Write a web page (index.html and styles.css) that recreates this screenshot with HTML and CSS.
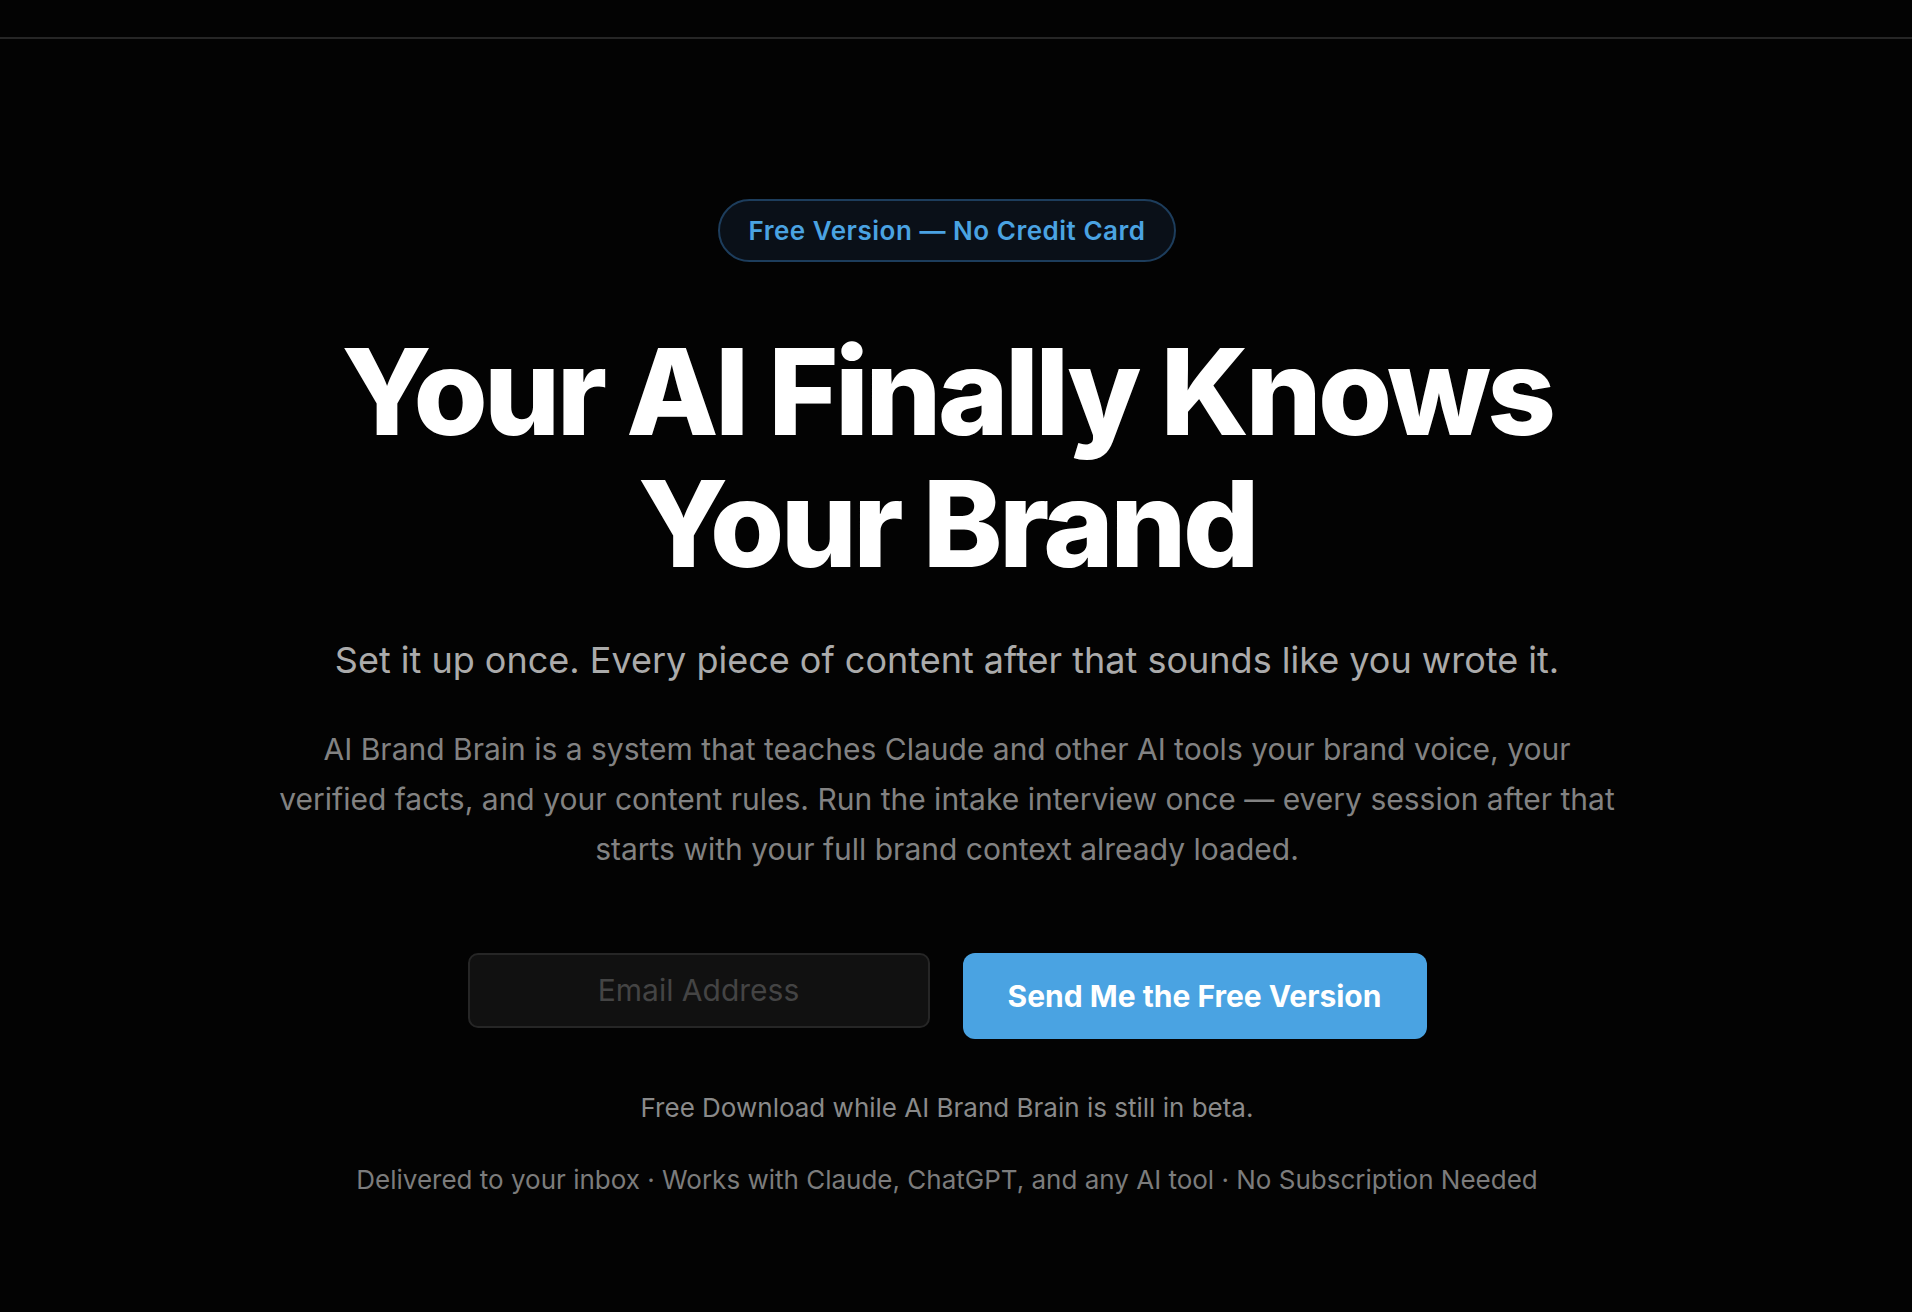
FILE: index.html
```html
<!DOCTYPE html>
<html lang="en">
<head>
<meta charset="utf-8">
<title>AI Brand Brain — Free Version</title>
<link rel="stylesheet" href="styles.css">
</head>
<body>
<header class="topbar"></header>
<main class="hero">
  <div class="badge">Free Version — No Credit Card</div>
  <h1 class="title">Your AI Finally Knows<br>Your Brand</h1>
  <p class="lead">Set it up once. Every piece of content after that sounds like you wrote it.</p>
  <p class="desc">AI Brand Brain is a system that teaches Claude and other AI tools your brand voice, your verified facts, and your content rules. Run the intake interview once — every session after that starts with your full brand context already loaded.</p>
  <form class="signup" onsubmit="return false;">
    <input class="email" type="email" placeholder="Email Address">
    <button class="cta" type="submit">Send Me the Free Version</button>
  </form>
  <p class="note">Free Download while AI Brand Brain is still in beta.</p>
  <p class="perks">Delivered to your inbox · Works with Claude, ChatGPT, and any AI tool · No Subscription Needed</p>
</main>
</body>
</html>
```
FILE: styles.css
```css
html, body {
  margin: 0;
  padding: 0;
  background: #030303;
  min-height: 100%;
}
body {
  font-family: Inter, "Noto Sans", "Liberation Sans", sans-serif;
  color: #fff;
  min-height: 1312px;
}
.topbar {
  height: 37px;
  border-bottom: 2px solid #262626;
}
.hero {
  display: flex;
  flex-direction: column;
  align-items: center;
  text-align: center;
  padding: 160px 18px 0 0;
}
.badge {
  box-sizing: border-box;
  height: 63px;
  padding: 0 28px;
  display: flex;
  align-items: center;
  border: 2px solid #1d3d5c;
  border-radius: 32px;
  background: #0a1018;
  color: #4aa3e2;
  font-size: 26px;
  font-weight: 600;
  letter-spacing: 0.02em;
}
.title {
  margin: 64px 0 0;
  font-size: 120px;
  line-height: 132px;
  font-weight: 800;
  letter-spacing: -0.03em;
  color: #fff;
}
.lead {
  margin: 47px 0 0;
  font-size: 36px;
  line-height: 1.3;
  color: #ababab;
}
.desc {
  margin: 40px 0 0;
  max-width: 1345px;
  font-size: 30px;
  line-height: 50px;
  color: #828282;
}
.signup {
  display: flex;
  align-items: flex-start;
  gap: 33px;
  margin-top: 79px;
}
.email {
  box-sizing: border-box;
  width: 462px;
  height: 75px;
  border: 2px solid #262626;
  border-radius: 10px;
  background: #111;
  color: #ddd;
  font-family: inherit;
  font-size: 30px;
  text-align: center;
  outline: none;
}
.email::placeholder {
  color: #444;
}
.cta {
  box-sizing: border-box;
  width: 464px;
  height: 86px;
  border: none;
  border-radius: 12px;
  background: #4aa3e2;
  color: #fff;
  font-family: inherit;
  font-size: 30px;
  font-weight: 700;
  cursor: pointer;
}
.note {
  margin: 51px 0 0;
  font-size: 26px;
  line-height: 1.4;
  color: #8a8a8a;
}
.perks {
  margin: 36px 0 0;
  font-size: 26px;
  line-height: 1.4;
  color: #7c7c7c;
}
```
